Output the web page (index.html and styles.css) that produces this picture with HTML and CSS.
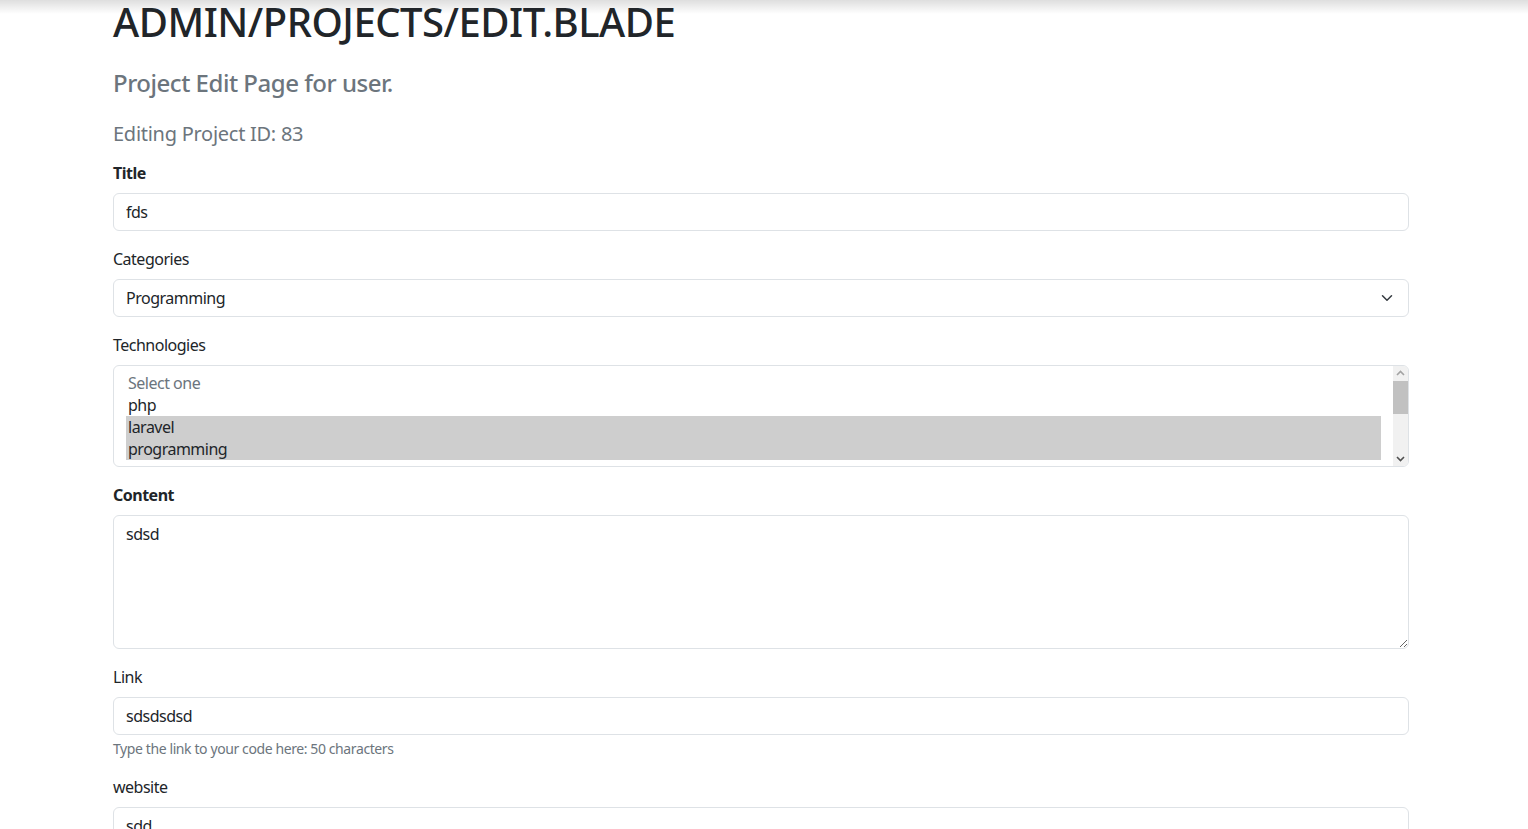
FILE: index.html
```html
<!DOCTYPE html>
<html lang="en">
<head>
<meta charset="utf-8">
<title>Edit project</title>
<link rel="stylesheet" href="styles.css">
</head>
<body>
<main class="container">
  <h1 class="page-title">ADMIN/PROJECTS/EDIT.BLADE</h1>
  <h4 class="subtitle">Project Edit Page for user.</h4>
  <h5 class="subtitle-sm">Editing Project ID: 83</h5>
  <form class="edit-form">
    <div class="field">
      <label class="label label-bold">Title</label>
      <input class="control" type="text" value="fds">
    </div>
    <div class="field">
      <label class="label">Categories</label>
      <div class="control select-control">
        <span>Programming</span>
        <svg class="chev" viewBox="0 0 16 16" width="16" height="12"><path fill="none" stroke="#343a40" stroke-linecap="round" stroke-linejoin="round" stroke-width="2" d="m2 5 6 6 6-6"/></svg>
      </div>
    </div>
    <div class="field">
      <label class="label">Technologies</label>
      <div class="multi">
        <div class="multi-list">
          <div class="opt opt-muted">Select one</div>
          <div class="opt">php</div>
          <div class="opt opt-sel">laravel</div>
          <div class="opt opt-sel">programming</div>
        </div>
        <div class="sbar">
          <svg class="sbar-arrow" viewBox="0 0 15 15" width="15" height="15"><path d="M4 9 7.5 5.5 11 9" fill="none" stroke="#a3a3a3" stroke-width="1.6"/></svg>
          <div class="sbar-track"><div class="sbar-thumb"></div></div>
          <svg class="sbar-arrow" viewBox="0 0 15 15" width="15" height="15"><path d="M4 6 7.5 9.5 11 6" fill="none" stroke="#505050" stroke-width="1.6"/></svg>
        </div>
      </div>
    </div>
    <div class="field">
      <label class="label label-bold">Content</label>
      <textarea class="control textarea">sdsd</textarea>
    </div>
    <div class="field">
      <label class="label">Link</label>
      <input class="control" type="text" value="sdsdsdsd">
      <div class="help">Type the link to your code here: 50 characters</div>
    </div>
    <div class="field">
      <label class="label">website</label>
      <input class="control" type="text" value="sdd">
    </div>
  </form>
</main>
</body>
</html>
```
FILE: styles.css
```css
* { box-sizing: border-box; }
html { margin: 0; padding: 0; background: #fff; }
body {
  margin: 0;
  padding: 0;
  background: linear-gradient(to bottom, rgba(0,0,0,0.13), rgba(0,0,0,0)) no-repeat top left / 100% 14px, #fff;
  font-family: "Noto Sans", "Liberation Sans", sans-serif;
  font-size: 16px;
  line-height: 1.5;
  letter-spacing: -0.5px;
  color: #212529;
  overflow: hidden;
  height: 829px;
}
.container {
  width: 1296px;
  margin-left: 113px;
}
.page-title {
  margin: 0 0 25px;
  font-size: 40px;
  font-weight: 500;
  line-height: 44px;
  letter-spacing: -0.5px;
}
.subtitle {
  margin: 0 0 24px;
  font-size: 24px;
  font-weight: 500;
  line-height: 1.2;
  letter-spacing: -0.48px;
  color: #6c757d;
}
.subtitle-sm {
  margin: 0 0 15px;
  font-size: 20px;
  font-weight: 400;
  line-height: 1.2;
  letter-spacing: -0.27px;
  color: #6c757d;
}
.field { margin-bottom: 16px; }
.label {
  display: block;
  margin-bottom: 8px;
}
.label-bold { font-weight: 700; }
.control {
  display: block;
  width: 100%;
  height: 38px;
  padding: 6px 12px;
  font: inherit;
  letter-spacing: inherit;
  color: #212529;
  background: #fff;
  border: 1px solid #dee2e6;
  border-radius: 6px;
  outline: none;
}
.select-control {
  display: flex;
  align-items: center;
  justify-content: space-between;
  padding-right: 13px;
}
.chev { display: block; }
.multi {
  display: flex;
  height: 102px;
  border: 1px solid #dee2e6;
  border-radius: 6px;
  overflow: hidden;
}
.multi-list {
  flex: 1;
  padding: 6px 12px;
}
.opt {
  height: 22px;
  line-height: 22px;
  padding: 0 2px;
  white-space: nowrap;
}
.opt-muted { color: #6c757d; }
.opt-sel { background: #cecece; }
.sbar {
  width: 15px;
  display: flex;
  flex-direction: column;
  background: #f1f1f1;
}
.sbar-arrow { display: block; flex: none; }
.sbar-track { flex: 1; }
.sbar-thumb {
  height: 33px;
  background: #c1c1c1;
}
.textarea {
  height: 134px;
  resize: vertical;
  line-height: 1.5;
}
.help {
  margin-top: 4px;
  font-size: 14px;
  line-height: 20px;
  letter-spacing: -0.4px;
  color: #6c757d;
}
```
